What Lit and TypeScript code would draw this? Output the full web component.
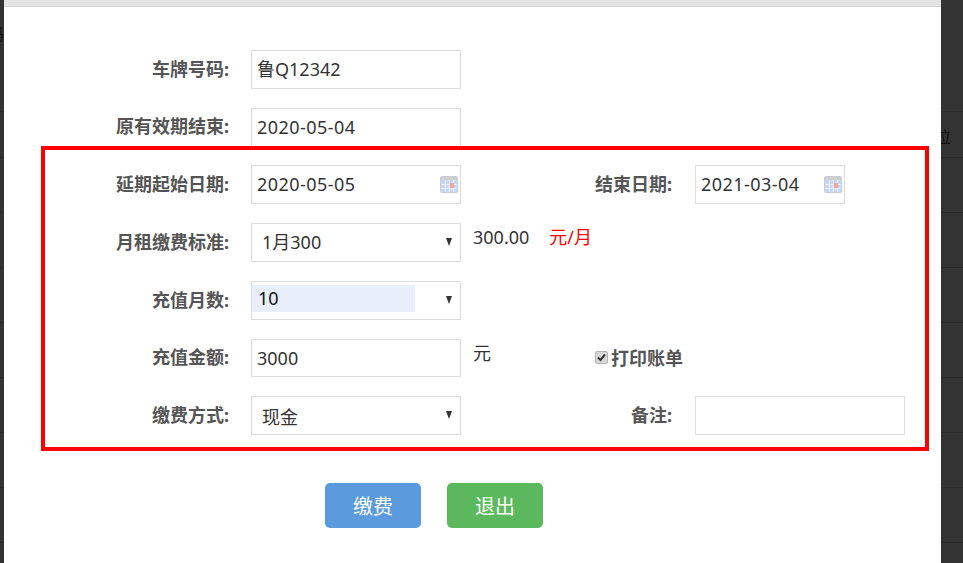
import { LitElement, html, css } from "lit";
import { customElement } from "lit/decorators.js";

const calendar = html`<svg class="cal" width="18" height="17" viewBox="0 0 18 17">
  <rect x="0.5" y="0.5" width="17" height="16" rx="1" fill="#c9d8f2" stroke="#c8ccd4"/>
  <rect x="1" y="1" width="16" height="3" fill="#cfcfcf"/>
  <path d="M1 8.5h16M1 12.5h16M5.5 4v12M9.5 4v12M13.5 4v12" stroke="#e9eefa" stroke-width="1"/>
  <rect x="10" y="7" width="4" height="5" fill="#f0a596"/>
</svg>`;

@customElement("app-root")
export class AppRoot extends LitElement {
  static styles = css`
    :host {
      display: block;
      position: relative;
      width: 963px;
      height: 563px;
      overflow: hidden;
      background: #333;
      font-family: "Noto Sans", "Noto Sans CJK SC", sans-serif;
      color: #333;
    }
    .lines {
      display: flex;
      flex-direction: column;
      padding-top: 45px;
    }
    .line {
      border-bottom: 1px solid #2a2a2a;
      box-sizing: border-box;
      height: 55px;
    }
    .line.first { height: 67px; }
    .line.second { height: 46px; }
    .ghost {
      position: absolute;
      font-size: 16px;
      line-height: 20px;
      color: #111;
    }
    .ghost.l { left: -12px; top: 24px; }
    .ghost.r { left: 935px; top: 127px; }
    .modal {
      position: absolute;
      left: 4px;
      top: 0;
      width: 937px;
      height: 563px;
      background: #fff;
      overflow: hidden;
    }
    .head {
      height: 7px;
      box-sizing: border-box;
      background: #e3e3e3;
      border-bottom: 1px solid #d4d4d4;
    }
    form {
      display: flex;
      flex-direction: column;
      padding-top: 43px;
    }
    .row {
      display: flex;
      align-items: flex-start;
      height: 39px;
      margin-bottom: 19px;
    }
    .row.tight { margin-bottom: 18px; }
    .lab {
      width: 225px;
      flex: none;
      margin-right: 22px;
      text-align: right;
      font-size: 18px;
      font-weight: 700;
      line-height: 38px;
      color: #555;
      white-space: nowrap;
    }
    .row.tight .lab { line-height: 37px; }
    .lab2 { width: 211px; margin-right: 23px; }
    .field {
      position: relative;
      box-sizing: border-box;
      width: 210px;
      height: 39px;
      flex: none;
      border: 1px solid #ddd;
      background: #fff;
      padding-left: 5px;
      font-size: 18px;
      line-height: 37px;
      color: #333;
      white-space: nowrap;
    }
    .field.date { letter-spacing: 0.45px; }
    .field.short { width: 150px; }
    .field.h38 { height: 38px; }
    .cal { position: absolute; right: 2px; top: 10px; }
    .select { padding-left: 10px; }
    .select.low { line-height: 40px; }
    .select::after {
      content: "";
      position: absolute;
      right: 8px;
      top: 14px;
      border-left: 3.5px solid transparent;
      border-right: 3.5px solid transparent;
      border-top: 8px solid #333;
    }
    .select.sel { padding-left: 0; }
    .hl {
      position: absolute;
      left: 0;
      top: 3px;
      width: 163px;
      height: 27px;
      padding-left: 6px;
      box-sizing: border-box;
      background: #e8effb;
      line-height: 27px;
      color: #111;
    }
    .aside {
      flex: none;
      margin-left: 12px;
      font-size: 18px;
      line-height: 28px;
      color: #333;
      white-space: nowrap;
    }
    .aside .red { color: #f00; margin-left: 20px; }
    .check {
      display: flex;
      align-items: center;
      gap: 3px;
      margin-left: 104px;
      height: 36px;
      font-size: 18px;
      font-weight: 700;
      color: #555;
      white-space: nowrap;
    }
    .box {
      display: flex;
      align-items: center;
      justify-content: center;
      width: 13px;
      height: 13px;
      border-radius: 2px;
      background: #d8d8d8;
      border: 1px solid #b5b5b5;
      box-sizing: border-box;
    }
    .actions {
      display: flex;
      gap: 26px;
      padding-left: 321px;
      margin-top: 29px;
    }
    .btn {
      display: flex;
      align-items: center;
      justify-content: center;
      width: 96px;
      height: 45px;
      border-radius: 5px;
      color: #fff;
      font-size: 20px;
    }
    .blue { background: #5b9bdd; }
    .green { background: #5cb85c; }
    .frame {
      position: absolute;
      left: 41px;
      top: 146px;
      width: 888px;
      height: 305px;
      box-sizing: border-box;
      border: 4px solid #f00;
      pointer-events: none;
    }
  `;

  private lab(t: string, second = false) {
    return html`<div class="lab ${second ? "lab2" : ""}">${t}:</div>`;
  }

  render() {
    return html`
      <div class="lines">
        <div class="line first"></div>
        <div class="line second"></div>
        ${Array.from({ length: 7 }, () => html`<div class="line"></div>`)}
      </div>
      <div class="ghost l">码</div>
      <div class="ghost r">位</div>
      <div class="modal">
        <div class="head"></div>
        <form>
          <div class="row">${this.lab("车牌号码")}<div class="field">鲁Q12342</div></div>
          <div class="row tight">${this.lab("原有效期结束")}<div class="field date">2020-05-04</div></div>
          <div class="row">
            ${this.lab("延期起始日期")}<div class="field date">2020-05-05${calendar}</div>
            ${this.lab("结束日期", true)}<div class="field short date">2021-03-04${calendar}</div>
          </div>
          <div class="row">
            ${this.lab("月租缴费标准")}<div class="field select">1月300</div>
            <div class="aside">300.00<span class="red">元/月</span></div>
          </div>
          <div class="row">
            ${this.lab("充值月数")}<div class="field select sel"><div class="hl">10</div></div>
          </div>
          <div class="row tight">
            ${this.lab("充值金额")}<div class="field h38">3000</div>
            <div class="aside">元</div>
            <div class="check">
              <span class="box"><svg width="9" height="9" viewBox="0 0 9 9"><path d="M1 4.5 3.5 7 8 1.5" fill="none" stroke="#333" stroke-width="2"/></svg></span>打印账单
            </div>
          </div>
          <div class="row">
            ${this.lab("缴费方式")}<div class="field select low">现金</div>
            ${this.lab("备注", true)}<div class="field"></div>
          </div>
          <div class="actions">
            <div class="btn blue">缴费</div>
            <div class="btn green">退出</div>
          </div>
        </form>
      </div>
      <div class="frame"></div>
    `;
  }
}
